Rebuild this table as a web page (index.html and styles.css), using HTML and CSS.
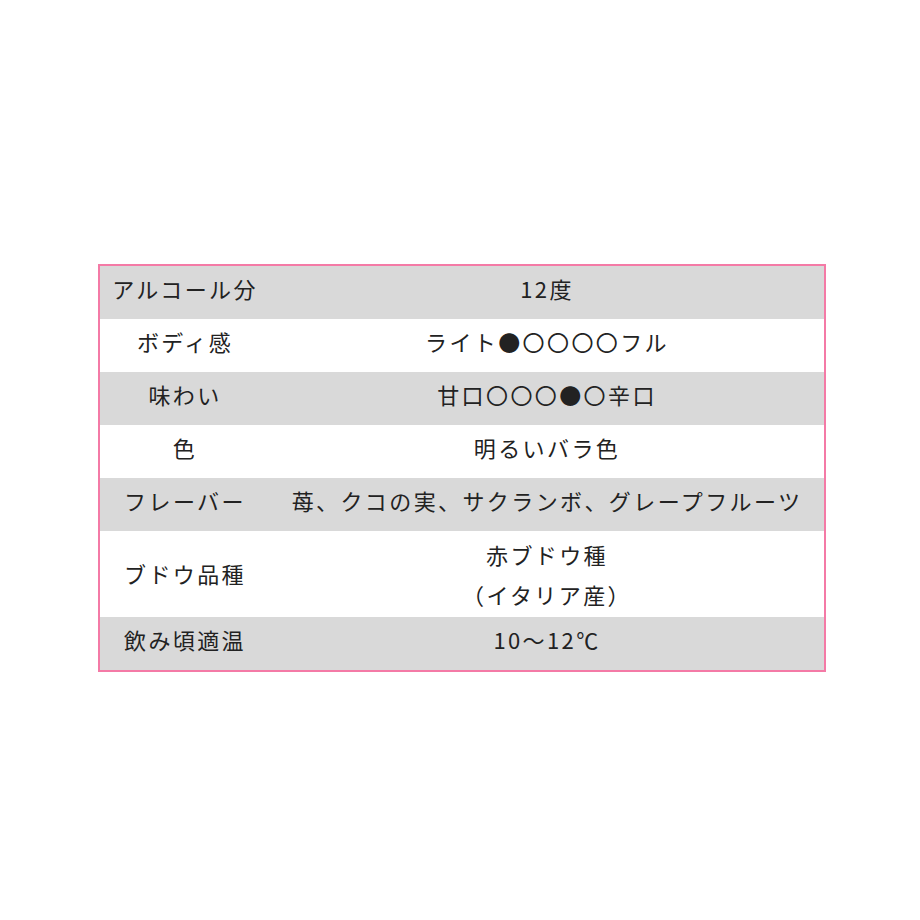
FILE: index.html
```html
<!DOCTYPE html>
<html lang="ja">
<head>
<meta charset="utf-8">
<title>ワイン情報</title>
<link rel="stylesheet" href="styles.css">
</head>
<body>
<div class="page">
  <table class="spec">
    <tbody>
      <tr class="shade"><th>アルコール分</th><td>12度</td></tr>
      <tr><th>ボディ感</th><td>ライト●〇〇〇〇フル</td></tr>
      <tr class="shade"><th>味わい</th><td>甘口〇〇〇●〇辛口</td></tr>
      <tr><th>色</th><td>明るいバラ色</td></tr>
      <tr class="shade"><th>フレーバー</th><td>苺、クコの実、サクランボ、グレープフルーツ</td></tr>
      <tr class="double"><th>ブドウ品種</th><td><div class="line">赤ブドウ種</div><div class="line">（イタリア産）</div></td></tr>
      <tr class="shade"><th>飲み頃適温</th><td>10～12℃</td></tr>
    </tbody>
  </table>
</div>
</body>
</html>
```
FILE: styles.css
```css
html, body {
  margin: 0;
  padding: 0;
  background: #ffffff;
}
.page {
  padding: 264px 0 0 98px;
}
.spec {
  width: 728px;
  border: 2px solid #f47aa6;
  border-collapse: collapse;
  font-family: "Noto Sans CJK JP", "Noto Sans", sans-serif;
  font-size: 22px;
  letter-spacing: 2.4px;
  color: #222222;
  table-layout: fixed;
}
.spec th, .spec td {
  font-weight: 400;
  text-align: center;
  vertical-align: middle;
  height: 43px;
  padding: 0 0 10px 0;
  line-height: 30px;
}
.spec th {
  width: 170px;
}
.spec .shade th, .spec .shade td {
  background: #d9d9d9;
}
.spec .double td {
  height: 86px;
  padding: 0;
}
.spec .double th {
  height: 84px;
  padding: 0 0 2px 0;
}
.line {
  line-height: 40px;
}
```
